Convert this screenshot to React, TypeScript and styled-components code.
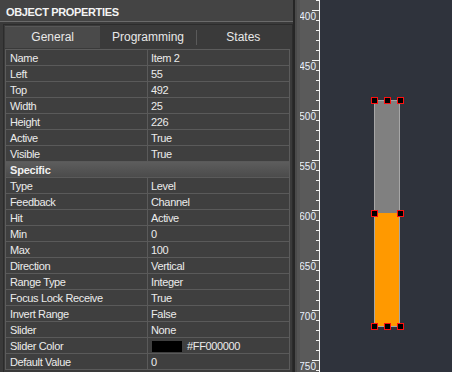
import React from "react";
import styled, { createGlobalStyle } from "styled-components";

const GlobalStyle = createGlobalStyle`
  html, body {
    margin: 0;
    padding: 0;
    background: #2f333c;
    overflow: hidden;
  }
  body {
    font-family: "Liberation Sans", Arial, sans-serif;
  }
`;

interface Prop {
  name: string;
  value?: string;
  header?: boolean;
  swatch?: string;
}

const props: Prop[] = [
  { name: "Name", value: "Item 2" },
  { name: "Left", value: "55" },
  { name: "Top", value: "492" },
  { name: "Width", value: "25" },
  { name: "Height", value: "226" },
  { name: "Active", value: "True" },
  { name: "Visible", value: "True" },
  { name: "Specific", header: true },
  { name: "Type", value: "Level" },
  { name: "Feedback", value: "Channel" },
  { name: "Hit", value: "Active" },
  { name: "Min", value: "0" },
  { name: "Max", value: "100" },
  { name: "Direction", value: "Vertical" },
  { name: "Range Type", value: "Integer" },
  { name: "Focus Lock Receive", value: "True" },
  { name: "Invert Range", value: "False" },
  { name: "Slider", value: "None" },
  { name: "Slider Color", value: "#FF000000", swatch: "#000000" },
  { name: "Default Value", value: "0" },
];

const tabs = ["General", "Programming", "States"];

const Screen = styled.div`
  display: flex;
  width: 452px;
  height: 372px;
  overflow: hidden;
`;

const Panel = styled.div`
  width: 293px;
  flex: none;
  background: #3a3a3a;
  display: flex;
  flex-direction: column;
`;

const TitleBar = styled.div`
  height: 22px;
  box-sizing: border-box;
  padding: 2px 0 0 6px;
  line-height: 20px;
  background: #444444;
  border-bottom: 1px solid #6a6a6a;
  color: #f4f4f4;
  font-size: 11px;
  font-weight: 700;
  letter-spacing: -0.35px;
`;

const Frame = styled.div`
  flex: 1;
  margin: 2px 0 0 3px;
  padding: 1px 1px 0 1px;
  border: 1px solid #2c2c2c;
  border-bottom: none;
  background: #3a3a3a;
  display: flex;
  flex-direction: column;
`;

const TabStrip = styled.div`
  display: flex;
  height: 23px;
`;

const Tab = styled.div<{ $active?: boolean; $sep?: boolean }>`
  flex: 1;
  position: relative;
  box-sizing: border-box;
  height: ${(p) => (p.$active ? "22px" : "23px")};
  line-height: 21px;
  text-align: center;
  font-size: 12px;
  color: #e8e8e8;
  background: ${(p) => (p.$active ? "#4a4a4a" : "transparent")};
  border-top: 1px solid ${(p) => (p.$active ? "#575757" : "transparent")};
  &::before {
    content: "";
    display: ${(p) => (p.$sep ? "block" : "none")};
    position: absolute;
    left: 0;
    top: 3px;
    bottom: 4px;
    width: 1px;
    background: #5a5a5a;
  }
`;

const Grid = styled.div`
  display: grid;
  grid-template-columns: 142px 1fr;
  border: 1px solid #5c5c5c;
  border-bottom: none;
  margin-right: 1px;
  background: #3f3f3f;
`;

const Cell = styled.div<{ $name?: boolean }>`
  height: 16px;
  box-sizing: border-box;
  border-bottom: 1px solid #5a5a5a;
  border-right: ${(p) => (p.$name ? "1px solid #5a5a5a" : "none")};
  padding-left: ${(p) => (p.$name ? "4px" : "3px")};
  font-size: 11px;
  letter-spacing: -0.35px;
  line-height: 16px;
  color: #ececec;
  white-space: nowrap;
  display: flex;
  align-items: center;
`;

const Section = styled.div`
  grid-column: 1 / span 2;
  height: 16px;
  box-sizing: border-box;
  border-bottom: 1px solid #5a5a5a;
  padding-left: 4px;
  font-size: 11px;
  font-weight: 700;
  letter-spacing: -0.2px;
  line-height: 16px;
  color: #f0f0f0;
  background: linear-gradient(#5d5d5d, #4b4b4b);
`;

const Swatch = styled.span<{ $color: string }>`
  display: inline-block;
  width: 30px;
  height: 11px;
  margin: 1px 5px 0 1px;
  background: ${(p) => p.$color};
`;

const Splitter = styled.div`
  width: 7px;
  flex: none;
  background: linear-gradient(
    to right,
    #262626 0,
    #262626 2px,
    #4a4a4a 2px,
    #4a4a4a 4px,
    #545454 4px
  );
`;

const Ruler = styled.div`
  width: 20px;
  flex: none;
  background: #5a5a5a;
`;

const Canvas = styled.div`
  flex: 1;
  position: relative;
  background: #2f333c;
`;

const Level = styled.div`
  position: absolute;
  left: 54px;
  top: 100px;
  width: 26px;
  height: 227px;
  box-sizing: border-box;
  border: 1px solid #a6a6a6;
  background: #808080;
  display: flex;
  flex-direction: column;
  justify-content: flex-end;
`;

const Fill = styled.div<{ $h: number }>`
  height: ${(p) => p.$h}px;
  background: #ff9900;
`;

const Handle = styled.div<{ $x: number; $y: number }>`
  position: absolute;
  left: ${(p) => p.$x}px;
  top: ${(p) => p.$y}px;
  width: 7px;
  height: 7px;
  box-sizing: border-box;
  border: 1px solid #ff1010;
  background: #000;
`;

const RulerDrawing: React.FC = () => {
  const ticks = [];
  for (let y = 0; y <= 370; y += 10) {
    const major = (y - 10) % 50 === 0;
    ticks.push(
      <rect
        key={y}
        x={major ? 12 : 16}
        y={y}
        width={major ? 7 : 3}
        height={1}
        fill="#f4f4f4"
      />
    );
  }
  const labels = [];
  for (let i = 0; i < 8; i++) {
    labels.push(
      <text
        key={i}
        x={16}
        y={19.5 + i * 50}
        textAnchor="end"
        fontSize="10"
        fontFamily="Liberation Sans, Arial, sans-serif"
        fill="#e8f0fc"
      >
        {400 + i * 50}
      </text>
    );
  }
  return (
    <svg width="20" height="372" style={{ display: "block" }}>
      {ticks}
      {labels}
      <rect x={19} y={0} width={1} height={372} fill="#f4f4f4" />
    </svg>
  );
};

const App: React.FC = () => {
  const handles = [
    [-3, -3],
    [10, -3],
    [23, -3],
    [-3, 110],
    [23, 110],
    [-3, 223],
    [10, 223],
    [23, 223],
  ];
  return (
    <>
      <GlobalStyle />
      <Screen>
        <Panel>
          <TitleBar>OBJECT PROPERTIES</TitleBar>
          <Frame>
            <TabStrip>
              {tabs.map((t, i) => (
                <Tab key={t} $active={i === 0} $sep={i === 2}>
                  {t}
                </Tab>
              ))}
            </TabStrip>
            <Grid>
              {props.map((p) =>
                p.header ? (
                  <Section key={p.name}>{p.name}</Section>
                ) : (
                  <React.Fragment key={p.name}>
                    <Cell $name>{p.name}</Cell>
                    <Cell>
                      {p.swatch && <Swatch $color={p.swatch} />}
                      {p.value}
                    </Cell>
                  </React.Fragment>
                )
              )}
            </Grid>
          </Frame>
        </Panel>
        <Splitter />
        <Ruler>
          <RulerDrawing />
        </Ruler>
        <Canvas>
          <Level>
            <Fill $h={113} />
          </Level>
          {handles.map(([x, y], i) => (
            <Handle key={i} $x={54 + x} $y={100 + y} />
          ))}
        </Canvas>
      </Screen>
    </>
  );
};

export default App;
